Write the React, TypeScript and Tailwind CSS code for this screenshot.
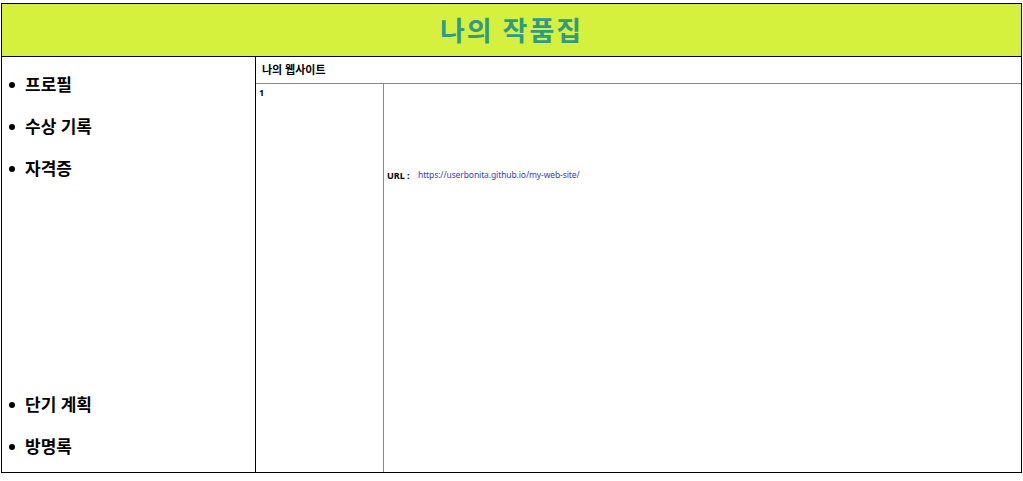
import React from 'react';

const topMenu = ['프로필', '수상 기록', '자격증'];
const bottomMenu = ['단기 계획', '방명록'];

function MenuItem({ label }: { label: string }) {
    return (
        <li className="flex items-center h-[42px]">
            <span className="w-[6px] h-[6px] rounded-full bg-black ml-[7px] mr-[10px]" />
            <span className="text-[17px] font-bold text-black">{label}</span>
        </li>
    );
}

export default function App() {
    return (
        <div
            className="w-[1023px] h-[481px] bg-white pt-[3px] pl-[1px] pr-[1px]"
            style={{ fontFamily: '"Noto Sans", "Noto Sans CJK KR", sans-serif' }}
        >
            {/* header */}
            <header className="h-[54px] border border-black bg-[#d6f03e] flex items-center justify-center">
                <h1 className="text-[27px] font-bold text-[#2d9b8a] tracking-[2px] leading-none">나의 작품집</h1>
            </header>

            <div className="flex h-[416px] border border-t-0 border-black">
                {/* side menu */}
                <nav className="w-[254px] border-r border-black flex flex-col justify-between pt-[7px] pb-[4px]">
                    <ul>
                        {topMenu.map((m) => (
                            <MenuItem key={m} label={m} />
                        ))}
                    </ul>
                    <ul>
                        {bottomMenu.map((m) => (
                            <MenuItem key={m} label={m} />
                        ))}
                    </ul>
                </nav>

                {/* content */}
                <main className="flex-1 flex flex-col">
                    <div className="h-[27px] border-b border-[#8a8a8a] flex items-center px-[6px]">
                        <span className="text-[11px] font-bold text-black">나의 웹사이트</span>
                    </div>
                    <div className="flex flex-1">
                        <div className="w-[128px] border-r border-[#8a8a8a] px-[3px] pt-[4px] text-[9px] font-bold text-black leading-none">
                            1
                        </div>
                        <div className="flex-1 pt-[87px] px-[3px]">
                            <div className="flex items-center leading-none">
                                <span className="font-bold text-black text-[9px] w-[31px]">URL :</span>
                                <span className="text-[#3a3acb] text-[8.5px] tracking-[-0.1px]">https://userbonita.github.io/my-web-site/</span>
                            </div>
                        </div>
                    </div>
                </main>
            </div>
        </div>
    );
}
